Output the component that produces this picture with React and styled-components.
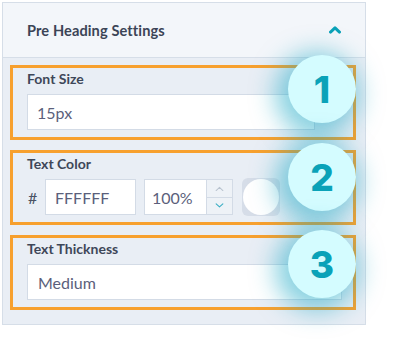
import React from "react";
import styled, { createGlobalStyle } from "styled-components";

const Global = createGlobalStyle`
  html, body { margin: 0; padding: 0; background: #ffffff; }
  body { font-family: Lato, "Open Sans", sans-serif; }
  * { box-sizing: border-box; }
`;

const Page = styled.div`
  position: relative;
  width: 400px;
  height: 348px;
  padding: 2px 0 0 2px;
`;

const Panel = styled.div`
  width: 364px;
  border: 1px solid #d6dee8;
  background: #e9eef5;
`;

const Header = styled.div`
  height: 55px;
  display: flex;
  align-items: center;
  justify-content: space-between;
  padding: 0 24px 0 24px;
  background: #f3f6fa;
  border-bottom: 1px solid #d6dee8;
`;

const Title = styled.div`
  font-weight: 700;
  font-size: 14.6px;
  color: #3b4456;
  letter-spacing: 0.1px;
`;

const Body = styled.div`
  display: flex;
  flex-direction: column;
  gap: 10px;
  padding: 7px 9px 14px 7px;
`;

const Group = styled.div`
  border: 3px solid #f7a02e;
  padding: 3px 10px 7px 14px;
  display: flex;
  flex-direction: column;
  gap: 7px;
`;

const Label = styled.div`
  font-size: 14px;
  font-weight: 700;
  color: #3e4759;
  line-height: 16px;
`;

const Input = styled.div`
  width: ${(p) => p.$w}px;
  height: 36px;
  background: #ffffff;
  border: 1px solid #d3dbe6;
  display: flex;
  align-items: center;
  padding-left: ${(p) => p.$pl || 9}px;
  font-size: 16px;
  color: #5b5f7b;
`;

const Row = styled.div`
  display: flex;
  align-items: center;
  height: 36px;
`;

const Hash = styled.span`
  font-size: 16px;
  color: #4a5264;
  width: 18px;
  padding-left: 1px;
`;

const Percent = styled.div`
  display: flex;
  margin-left: 8px;
  height: 36px;
`;

const PercentBox = styled.div`
  width: 62px;
  height: 36px;
  background: #fff;
  border: 1px solid #d3dbe6;
  border-right: none;
  display: flex;
  align-items: center;
  padding-left: 7px;
  font-size: 16px;
  color: #5b5f7b;
`;

const Spinner = styled.div`
  width: 27px;
  display: flex;
  flex-direction: column;
  border: 1px solid #d3dbe6;
  background: #eef2f7;
`;

const SpinBtn = styled.div`
  flex: 1;
  display: flex;
  align-items: center;
  justify-content: center;
  border-top: ${(p) => (p.$bottom ? "1px solid #d3dbe6" : "none")};
`;

const Swatch = styled.div`
  margin-left: 9px;
  width: 38px;
  height: 38px;
  border-radius: 6px;
  background: #d6dde8;
  display: flex;
  align-items: center;
  justify-content: center;
`;

const SwatchDot = styled.div`
  width: 36px;
  height: 36px;
  border-radius: 50%;
  background: #ffffff;
`;

const Badge = styled.div`
  position: absolute;
  left: ${(p) => p.$x - 34}px;
  top: ${(p) => p.$y - 34}px;
  width: 68px;
  height: 68px;
  border-radius: 50%;
  background: #d4fcff;
  box-shadow: -5px 5px 24px 8px rgba(20, 165, 195, 0.5);
  display: flex;
  align-items: center;
  justify-content: center;
  font-family: Inter, Lato, sans-serif;
  font-weight: 800;
  font-size: 37px;
  color: #0aa2b8;
`;

const Chevron = ({ up, color = "#0aa2b8", w = 12, sw = 3 }) => (
  <svg width={w} height={w * 0.6} viewBox="0 0 12 7" fill="none">
    <path
      d={up ? "M1.5 6L6 1.8L10.5 6" : "M1.5 1L6 5.2L10.5 1"}
      stroke={color}
      strokeWidth={sw}
      strokeLinecap="round"
      strokeLinejoin="round"
    />
  </svg>
);

export default function App() {
  return (
    <Page>
      <Global />
      <Panel>
        <Header>
          <Title>Pre Heading Settings</Title>
          <Chevron up />
        </Header>
        <Body>
          <Group>
            <Label>Font Size</Label>
            <Input $w={288}>15px</Input>
          </Group>
          <Group>
            <Label>Text Color</Label>
            <Row>
              <Hash>#</Hash>
              <Input $w={91}>FFFFFF</Input>
              <Percent>
                <PercentBox>100%</PercentBox>
                <Spinner>
                  <SpinBtn>
                    <Chevron up color="#b9c3cf" w={9} sw={1.4} />
                  </SpinBtn>
                  <SpinBtn $bottom>
                    <Chevron color="#3aaec4" w={9} sw={1.4} />
                  </SpinBtn>
                </Spinner>
              </Percent>
              <Swatch>
                <SwatchDot />
              </Swatch>
            </Row>
          </Group>
          <Group>
            <Label>Text Thickness</Label>
            <Input $w={315} $pl={10}>Medium</Input>
          </Group>
        </Body>
      </Panel>
      <Badge $x={322} $y={89}>1</Badge>
      <Badge $x={322} $y={177}>2</Badge>
      <Badge $x={322} $y={264}>3</Badge>
    </Page>
  );
}
